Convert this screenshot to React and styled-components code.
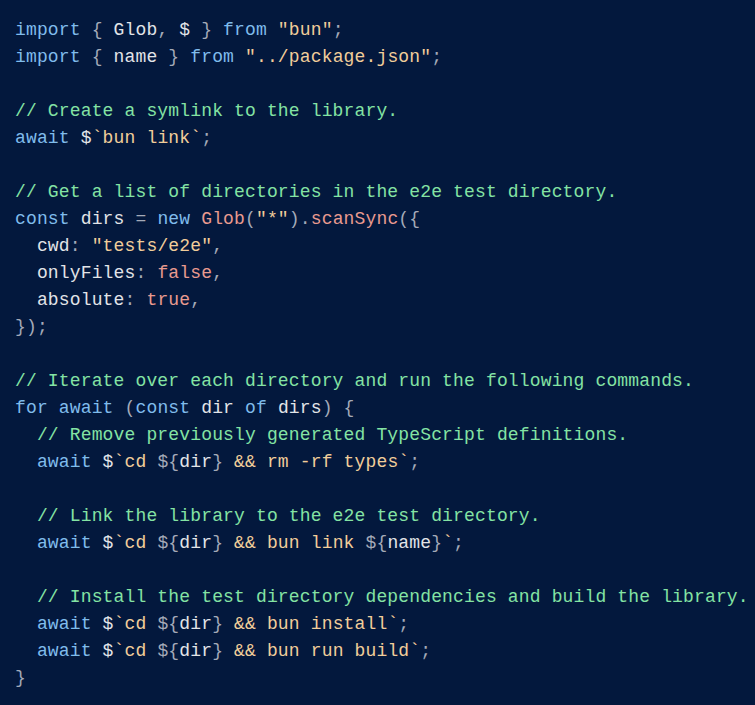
import styled, { createGlobalStyle } from "styled-components";

const GlobalStyles = createGlobalStyle`
  html, body {
    margin: 0;
    padding: 0;
    background: #03183d;
  }
`;

// token kinds -> colours
const colors = {
  kw: "#80bcec",
  cm: "#84e3a4",
  st: "#f1cd9a",
  fn: "#e99a8f",
  id: "#e2e4e8",
  pu: "#a4aab8",
};

const k = (t) => ["kw", t];
const c = (t) => ["cm", t];
const s = (t) => ["st", t];
const f = (t) => ["fn", t];
const i = (t) => ["id", t];
const p = (t) => ["pu", t];

const lines = [
  [k("import"), p(" { "), i("Glob"), p(", "), i("$"), p(" } "), k("from"), s(' "bun"'), p(";")],
  [k("import"), p(" { "), i("name"), p(" } "), k("from"), s(' "../package.json"'), p(";")],
  [],
  [c("// Create a symlink to the library.")],
  [k("await"), i(" $"), s("`bun link`"), p(";")],
  [],
  [c("// Get a list of directories in the e2e test directory.")],
  [k("const"), i(" dirs "), p("= "), k("new "), f("Glob"), p("("), s('"*"'), p(")."), f("scanSync"), p("({")],
  [i("  cwd"), p(": "), s('"tests/e2e"'), p(",")],
  [i("  onlyFiles"), p(": "), f("false"), p(",")],
  [i("  absolute"), p(": "), f("true"), p(",")],
  [p("});")],
  [],
  [c("// Iterate over each directory and run the following commands.")],
  [k("for await "), p("("), k("const "), i("dir "), k("of "), i("dirs"), p(") {")],
  [c("  // Remove previously generated TypeScript definitions.")],
  [k("  await"), i(" $"), s("`cd "), p("${"), i("dir"), p("}"), s(" && rm -rf types`"), p(";")],
  [],
  [c("  // Link the library to the e2e test directory.")],
  [k("  await"), i(" $"), s("`cd "), p("${"), i("dir"), p("}"), s(" && bun link "), p("${"), i("name"), p("}"), s("`"), p(";")],
  [],
  [c("  // Install the test directory dependencies and build the library.")],
  [k("  await"), i(" $"), s("`cd "), p("${"), i("dir"), p("}"), s(" && bun install`"), p(";")],
  [k("  await"), i(" $"), s("`cd "), p("${"), i("dir"), p("}"), s(" && bun run build`"), p(";")],
  [p("}")],
];

export default function App() {
  return (
    <>
      <GlobalStyles />
      <CodeBlock>
        <code>
          {lines.map((line, n) => (
            <Line key={n}>
              {line.length === 0
                ? " "
                : line.map(([kind, text], j) => (
                    <Token key={j} $kind={kind}>{text}</Token>
                  ))}
            </Line>
          ))}
        </code>
      </CodeBlock>
    </>
  );
}

const CodeBlock = styled.pre`
  margin: 0;
  padding: 17px 15px 20px 15px;
  background: #03183d;
  min-height: 705px;
  box-sizing: border-box;
  font-family: "Liberation Mono", "DejaVu Sans Mono", monospace;
  font-size: 18px;
  line-height: 27px;
  letter-spacing: 0.15px;
  white-space: pre;
  overflow: hidden;

  code {
    font-family: inherit;
  }
`;

const Line = styled.div`
  height: 27px;
`;

const Token = styled.span`
  color: ${(props) => colors[props.$kind]};
`;
